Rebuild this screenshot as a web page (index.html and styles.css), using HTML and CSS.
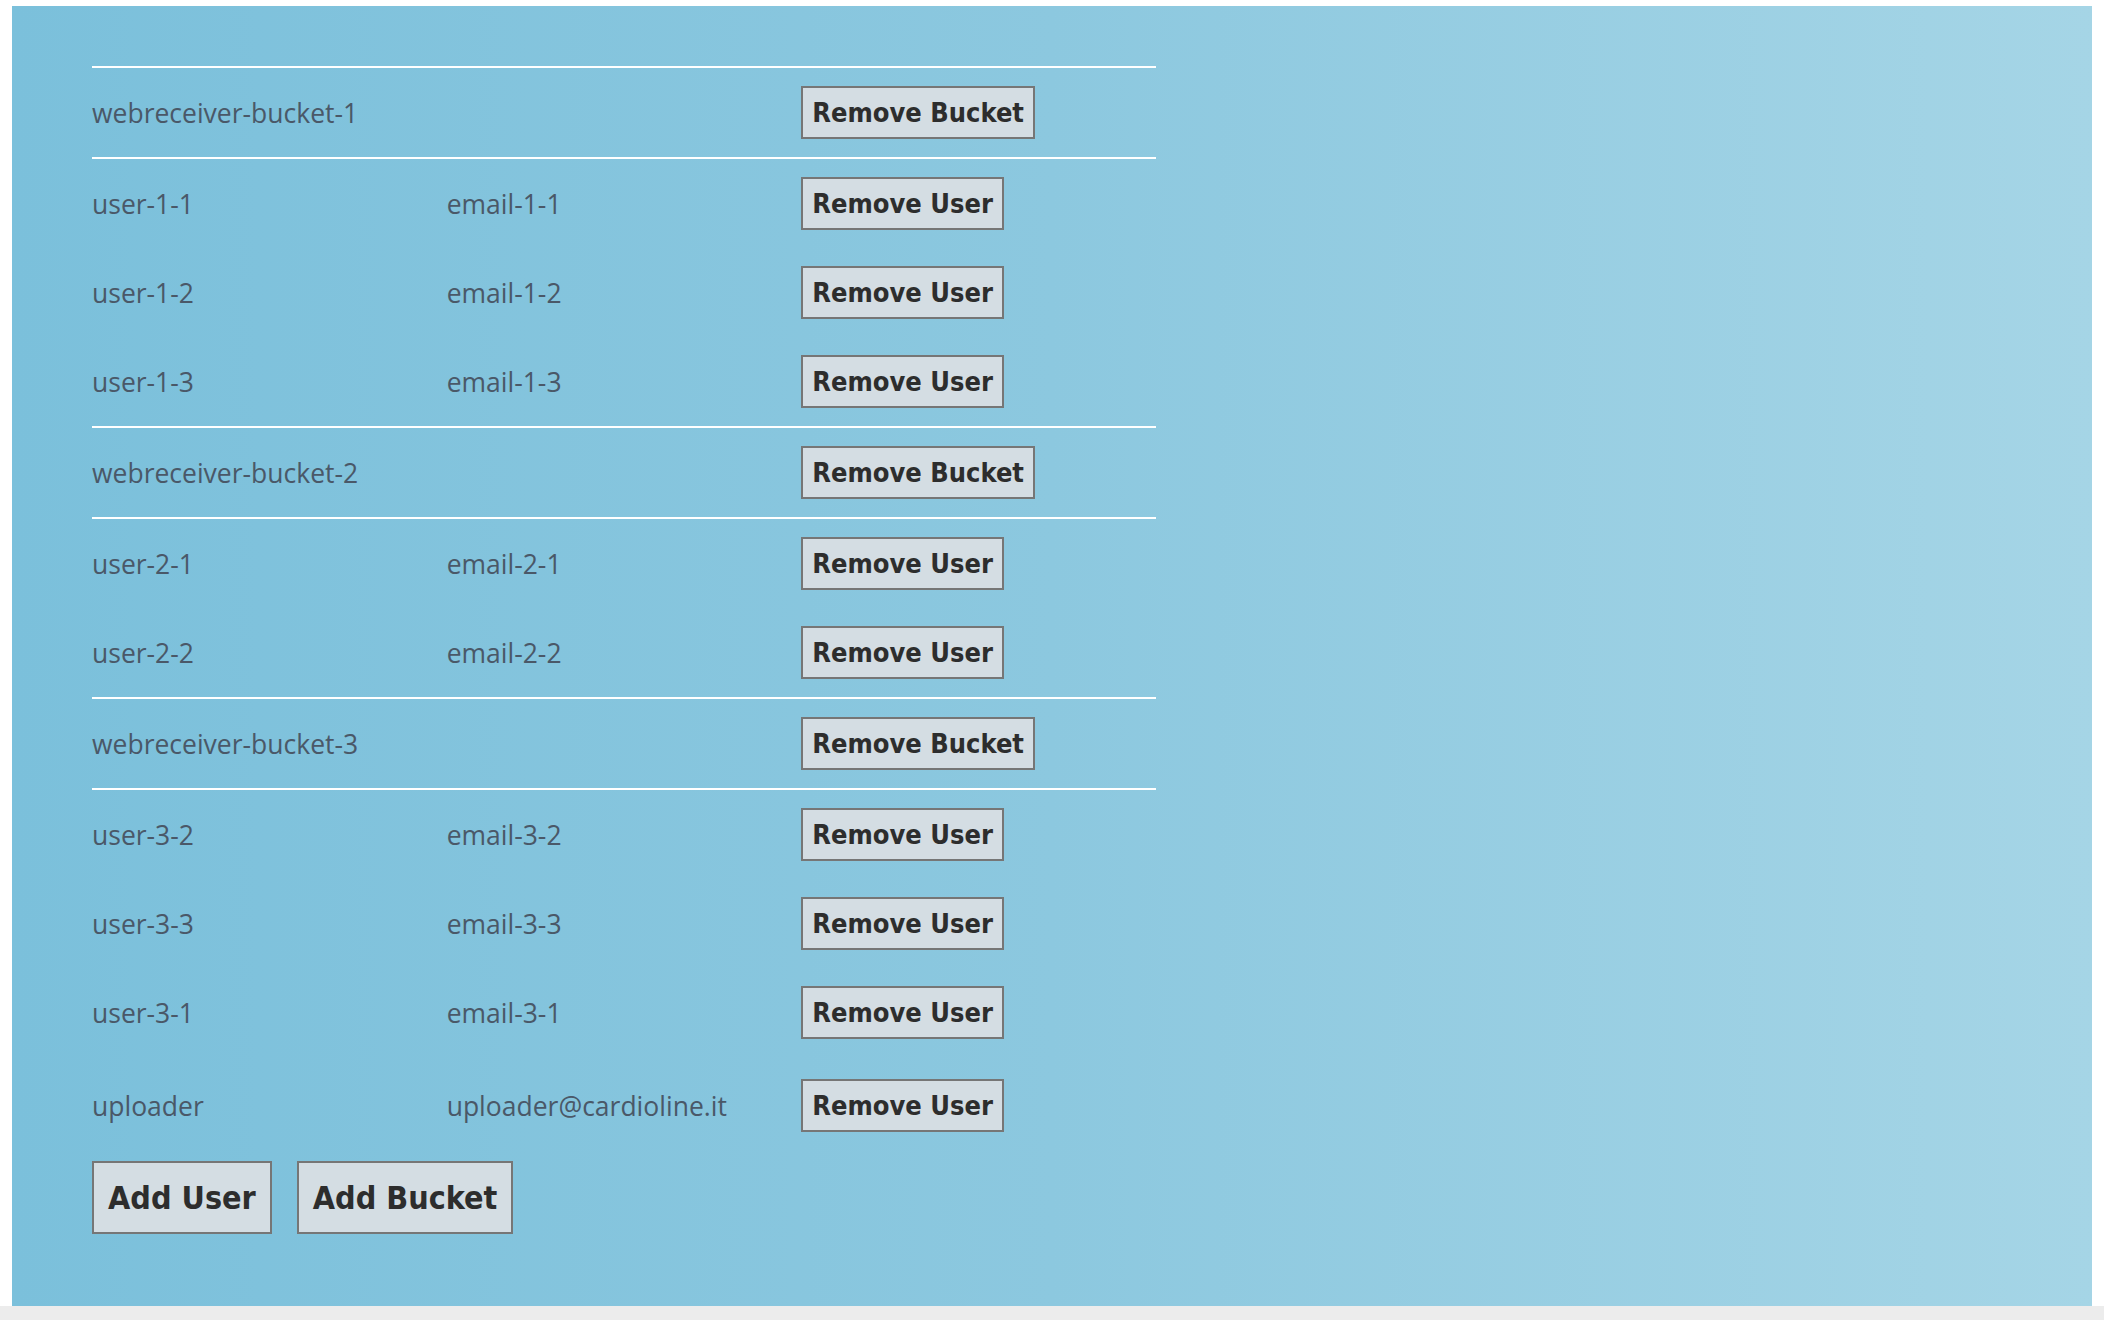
FILE: index.html
```html
<!DOCTYPE html>
<html>
<head>
<meta charset="utf-8">
<title>Buckets</title>
<link rel="stylesheet" href="styles.css">
</head>
<body>
<div class="panel">
  <table class="list">
    <colgroup><col class="c"><col class="c"><col class="c"></colgroup>
    <tr class="bucket"><td>webreceiver-bucket-1</td><td></td><td><button class="btn">Remove Bucket</button></td></tr>
    <tr><td>user-1-1</td><td>email-1-1</td><td><button class="btn">Remove User</button></td></tr>
    <tr><td>user-1-2</td><td>email-1-2</td><td><button class="btn">Remove User</button></td></tr>
    <tr><td>user-1-3</td><td>email-1-3</td><td><button class="btn">Remove User</button></td></tr>
    <tr class="bucket"><td>webreceiver-bucket-2</td><td></td><td><button class="btn">Remove Bucket</button></td></tr>
    <tr><td>user-2-1</td><td>email-2-1</td><td><button class="btn">Remove User</button></td></tr>
    <tr><td>user-2-2</td><td>email-2-2</td><td><button class="btn">Remove User</button></td></tr>
    <tr class="bucket"><td>webreceiver-bucket-3</td><td></td><td><button class="btn">Remove Bucket</button></td></tr>
    <tr><td>user-3-2</td><td>email-3-2</td><td><button class="btn">Remove User</button></td></tr>
    <tr><td>user-3-3</td><td>email-3-3</td><td><button class="btn">Remove User</button></td></tr>
    <tr><td>user-3-1</td><td>email-3-1</td><td><button class="btn">Remove User</button></td></tr>
    <tr class="last"><td>uploader</td><td>uploader@cardioline.it</td><td><button class="btn">Remove User</button></td></tr>
  </table>
  <div class="actions">
    <button class="btn big">Add User</button>
    <button class="btn big">Add Bucket</button>
  </div>
</div>
<div class="strip"></div>
</body>
</html>
```
FILE: styles.css
```css
html { background: #ffffff; }
body { margin: 0; }
.panel {
  margin: 6px 12px 0;
  height: 1300px;
  box-sizing: border-box;
  padding: 60px 0 0 80px;
  background: linear-gradient(to right, #7bc0db 0%, #8cc8df 50%, #a5d5e6 100%);
}
.list {
  width: 1064px;
  table-layout: fixed;
  border-collapse: collapse;
  border-spacing: 0;
}
.list td {
  height: 89px;
  padding: 0;
  vertical-align: middle;
  font-family: "Open Sans", "Noto Sans", sans-serif;
  font-size: 26.5px;
  color: #4a5868;
  white-space: nowrap;
}
.list .last td {
  padding-top: 4px;
}
.bucket td {
  border-top: 2px solid #ffffff;
  border-bottom: 2px solid #ffffff;
}
.btn {
  height: 53px;
  box-sizing: border-box;
  padding: 0 9px;
  margin: 0;
  background: #d4dde3;
  border: 2px solid #767676;
  border-radius: 0;
  font-family: "DejaVu Sans Condensed", "DejaVu Sans", sans-serif;
  font-weight: bold;
  font-size: 27px;
  color: #2d2d2d;
  vertical-align: middle;
}
.actions {
  display: flex;
  gap: 25px;
  margin-top: 11px;
}
.btn.big {
  height: 73px;
  padding: 0 14px;
  font-size: 32px;
}
.strip {
  height: 14px;
  background: #ececec;
}
```
